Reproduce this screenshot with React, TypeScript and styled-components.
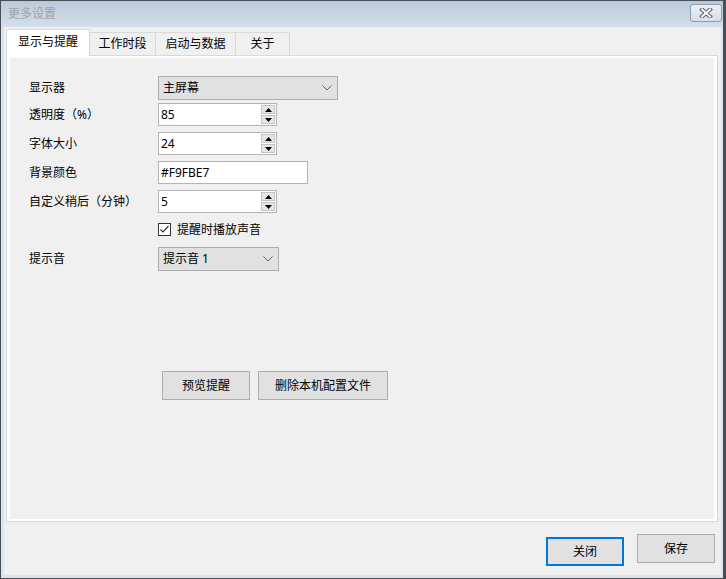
import React from "react";
import styled, { createGlobalStyle } from "styled-components";

const GlobalStyle = createGlobalStyle`
  html, body {
    margin: 0;
    padding: 0;
    background: #f0f0f0;
  }
  body {
    font-family: "Noto Sans", "Noto Sans CJK SC", sans-serif;
    font-size: 12px;
    color: #000;
  }
  * {
    box-sizing: border-box;
  }
`;

const Window = styled.div`
  width: 726px;
  height: 579px;
  display: flex;
  flex-direction: column;
  border: 1px solid #4a4d52;
  border-right-width: 3px;
  background: linear-gradient(#bac9da, #d4dfeb 26px, #dbe5f1 27px);
`;

const TitleBar = styled.div`
  height: 26px;
  flex: none;
  display: flex;
  align-items: center;
  justify-content: space-between;
  padding: 0 1px 0 7px;
`;

const Title = styled.span`
  color: #9ca3ab;
  font-size: 12px;
  line-height: 14px;
`;

const CloseButton = styled.button`
  width: 32px;
  height: 18px;
  margin-bottom: 2px;
  padding: 0;
  border: 1px solid #8c9ab0;
  border-radius: 3px;
  background: linear-gradient(#eaf0f6, #d5dfea);
  display: flex;
  align-items: center;
  justify-content: center;
`;

const Client = styled.div`
  flex: 1;
  margin: 0 2px 3px 3px;
  background: #f0f0f0;
  display: flex;
  flex-direction: column;
  padding: 2px 3px 0 2px;
`;

const TabStrip = styled.div`
  height: 26px;
  display: flex;
  align-items: flex-end;
`;

const Tab = styled.div<{ $active?: boolean; $width: number }>`
  position: relative;
  z-index: ${(p) => (p.$active ? 2 : 1)};
  width: ${(p) => p.$width}px;
  height: ${(p) => (p.$active ? 27 : 23)}px;
  margin-left: -1px;
  margin-bottom: ${(p) => (p.$active ? -1 : 0)}px;
  border: 1px solid #d9d9d9;
  border-bottom: none;
  background: ${(p) => (p.$active ? "#ffffff" : "#f0f0f0")};
  display: flex;
  align-items: center;
  justify-content: center;
  padding-bottom: ${(p) => (p.$active ? 2 : 0)}px;
  line-height: 14px;
  &:first-child {
    margin-left: 0;
  }
`;

const Panel = styled.div`
  height: 467px;
  border: 1px solid #d9d9d9;
  background: #ffffff;
  padding: 2px 3px 2px 3px;
`;

const Page = styled.div`
  height: 100%;
  background: #f0f0f0;
  padding: 18px 0 0 19px;
  display: flex;
  flex-direction: column;
`;

const Row = styled.div<{ $top: number }>`
  display: flex;
  align-items: center;
  margin-top: ${(p) => p.$top}px;
`;

const Label = styled.div`
  width: 129px;
  flex: none;
  line-height: 14px;
`;

const Select = styled.div<{ $width: number }>`
  width: ${(p) => p.$width}px;
  height: 24px;
  border: 1px solid #adadad;
  background: #e1e1e1;
  display: flex;
  align-items: center;
  justify-content: space-between;
  padding: 0 5px 0 4px;
  line-height: 14px;
`;

const Spin = styled.div`
  width: 119px;
  height: 23px;
  border: 1px solid #b4b4b4;
  background: #ffffff;
  display: flex;
  align-items: center;
  justify-content: space-between;
  padding: 0 1px 0 2px;
  line-height: 14px;
`;

const SpinButtons = styled.div`
  width: 14px;
  height: 19px;
  display: flex;
  flex-direction: column;
  gap: 1px;
`;

const SpinButton = styled.div`
  flex: 1;
  border: 1px solid #c3c3c3;
  background: #e6e6e6;
  display: flex;
  align-items: center;
  justify-content: center;
`;

const TextBox = styled.div`
  width: 150px;
  height: 23px;
  border: 1px solid #b4b4b4;
  background: #ffffff;
  display: flex;
  align-items: center;
  padding: 0 2px;
  line-height: 14px;
`;

const CheckRow = styled.div`
  display: flex;
  align-items: center;
  gap: 6px;
  margin-left: 129px;
  margin-top: 8px;
  height: 17px;
  line-height: 14px;
`;

const CheckBox = styled.div`
  width: 13px;
  height: 13px;
  border: 1px solid #333333;
  background: #ffffff;
  display: flex;
  align-items: center;
  justify-content: center;
`;

const ActionRow = styled.div`
  display: flex;
  gap: 8px;
  margin: 100px 0 0 133px;
`;

const Button = styled.div<{ $width: number; $default?: boolean; $top?: number }>`
  width: ${(p) => p.$width}px;
  height: 29px;
  margin-top: ${(p) => p.$top ?? 0}px;
  border: ${(p) => (p.$default ? "2px solid #0078d7" : "1px solid #adadad")};
  background: #e1e1e1;
  display: flex;
  align-items: center;
  justify-content: center;
  line-height: 14px;
`;

const Footer = styled.div`
  display: flex;
  justify-content: flex-end;
  align-items: flex-start;
  gap: 13px;
  padding: 12px 3px 0 0;
`;

const Chevron = () => (
  <svg width="10" height="6" viewBox="0 0 10 6">
    <path d="M0.5 0.5 L5 5 L9.5 0.5" fill="none" stroke="#606060" strokeWidth="1" />
  </svg>
);

const Arrow = ({ up }: { up?: boolean }) => (
  <svg width="7" height="4" viewBox="0 0 7 4">
    <path d={up ? "M0 4 L3.5 0 L7 4 Z" : "M0 0 L3.5 4 L7 0 Z"} fill="#000" />
  </svg>
);

const SpinBox = ({ value }: { value: string }) => (
  <Spin>
    <span>{value}</span>
    <SpinButtons>
      <SpinButton>
        <Arrow up />
      </SpinButton>
      <SpinButton>
        <Arrow />
      </SpinButton>
    </SpinButtons>
  </Spin>
);

const tabs = [
  { name: "显示与提醒", width: 84 },
  { name: "工作时段", width: 67 },
  { name: "启动与数据", width: 81 },
  { name: "关于", width: 55 },
];

export default function App() {
  return (
    <>
      <GlobalStyle />
      <Window>
        <TitleBar>
          <Title>更多设置</Title>
          <CloseButton>
            <svg width="14" height="10" viewBox="0 0 14 10">
              <path d="M3 1.5 L11 8.5 M11 1.5 L3 8.5" stroke="#5b5f66" strokeWidth="4" strokeLinecap="square" />
              <path d="M3 1.5 L11 8.5 M11 1.5 L3 8.5" stroke="#ffffff" strokeWidth="2" strokeLinecap="square" />
            </svg>
          </CloseButton>
        </TitleBar>
        <Client>
          <TabStrip>
            {tabs.map((t, i) => (
              <Tab key={t.name} $active={i === 0} $width={t.width}>
                {t.name}
              </Tab>
            ))}
          </TabStrip>
          <Panel>
            <Page>
              <Row $top={0}>
                <Label>显示器</Label>
                <Select $width={180}>
                  <span>主屏幕</span>
                  <Chevron />
                </Select>
              </Row>
              <Row $top={3}>
                <Label>透明度（%）</Label>
                <SpinBox value="85" />
              </Row>
              <Row $top={6}>
                <Label>字体大小</Label>
                <SpinBox value="24" />
              </Row>
              <Row $top={6}>
                <Label>背景颜色</Label>
                <TextBox>#F9FBE7</TextBox>
              </Row>
              <Row $top={6}>
                <Label>自定义稍后（分钟）</Label>
                <SpinBox value="5" />
              </Row>
              <CheckRow>
                <CheckBox>
                  <svg width="11" height="11" viewBox="0 0 11 11">
                    <path d="M1.5 5.5 L4 8 L9.5 2" fill="none" stroke="#333" strokeWidth="1.2" />
                  </svg>
                </CheckBox>
                <span>提醒时播放声音</span>
              </CheckRow>
              <Row $top={9}>
                <Label>提示音</Label>
                <Select $width={121}>
                  <span>提示音 1</span>
                  <Chevron />
                </Select>
              </Row>
              <ActionRow>
                <Button $width={88}>预览提醒</Button>
                <Button $width={130}>删除本机配置文件</Button>
              </ActionRow>
            </Page>
          </Panel>
          <Footer>
            <Button $width={78} $default $top={3}>
              关闭
            </Button>
            <Button $width={78}>保存</Button>
          </Footer>
        </Client>
      </Window>
    </>
  );
}
